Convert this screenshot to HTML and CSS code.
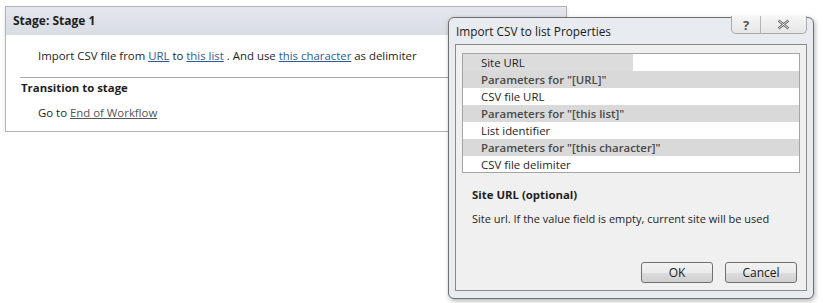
FILE: index.html
```html
<!DOCTYPE html>
<html lang="en">
<head>
  <meta charset="UTF-8">
  <title>Stage: Stage 1</title>
  <link rel="stylesheet" href="styles.css">
</head>
<body>
  <div class="stage">
    <div class="stage-header">Stage: Stage 1</div>
    <div class="stage-action">
      Import CSV file from <a href="#">URL</a> to <a href="#">this list</a> . And use <a href="#">this character</a> as delimiter
    </div>
    <div class="stage-transition">
      <div class="transition-title">Transition to stage</div>
      <div class="transition-go">Go to <a href="#" class="plain-link">End of Workflow</a></div>
    </div>
  </div>

  <div class="dialog">
    <div class="title-buttons">
      <span class="tb tb-help">?</span>
      <span class="tb tb-close">
        <svg width="13" height="11" viewBox="0 0 13 11"><path d="M1.5 1.5 L11.5 9.5 M11.5 1.5 L1.5 9.5" stroke="#666" stroke-width="2.4" fill="none"/><path d="M1.5 1.5 L11.5 9.5 M11.5 1.5 L1.5 9.5" stroke="#fff" stroke-width="0.8" fill="none"/></svg>
      </span>
    </div>
    <div class="dialog-title">Import CSV to list Properties</div>
    <div class="dialog-body">
      <div class="prop-list">
        <div class="prop-row selected"><span class="prop-name">Site URL</span><span class="prop-value"></span></div>
        <div class="prop-row group">Parameters for "[URL]"</div>
        <div class="prop-row">CSV file URL</div>
        <div class="prop-row group">Parameters for "[this list]"</div>
        <div class="prop-row">List identifier</div>
        <div class="prop-row group">Parameters for "[this character]"</div>
        <div class="prop-row">CSV file delimiter</div>
      </div>
      <div class="prop-help">
        <div class="help-title">Site URL (optional)</div>
        <div class="help-text">Site url. If the value field is empty, current site will be used</div>
      </div>
      <div class="dialog-buttons">
        <button class="btn">OK</button>
        <button class="btn">Cancel</button>
      </div>
    </div>
  </div>
</body>
</html>
```

FILE: styles.css
```css
body {
  margin: 0;
  font-family: 'Open Sans', 'Noto Sans', sans-serif;
  font-size: 11.4px;
  color: #1e1e1e;
  background-color: #ffffff;
}
a {
  color: #2f5b96;
}
.plain-link {
  color: #555555;
}
.stage {
  margin: 6px 0 0 5px;
  width: 560px;
  border: 1px solid #b4b4b4;
  background-color: #ffffff;
  box-shadow: 0 2px 4px rgba(0,0,0,0.12);
}
.stage-header {
  height: 28px;
  line-height: 28px;
  padding-left: 7px;
  font-weight: bold;
  font-size: 12px;
  background: linear-gradient(#e3e6ec, #d9dde4);
}
.stage-action {
  padding: 12px 0 12px 32px;
  line-height: 18px;
}
.stage-transition {
  margin-left: 14px;
  border-top: 1px solid #a8a8a8;
  padding-bottom: 9px;
}
.transition-title {
  font-weight: bold;
  padding: 1px 0 0 1px;
  line-height: 17px;
}
.transition-go {
  padding: 8px 0 0 18px;
  line-height: 18px;
}
.dialog {
  position: absolute;
  left: 448px;
  top: 17px;
  width: 364px;
  height: 280px;
  border: 1px solid #6f6f6f;
  border-radius: 6px;
  background-color: #e8ebef;
  box-shadow: 1px 2px 5px rgba(0,0,0,0.3);
}
.dialog-title {
  height: 26px;
  line-height: 26px;
  padding-left: 7px;
  font-size: 11.8px;
  color: #1a1a1a;
}
.title-buttons {
  position: absolute;
  top: -2px;
  right: 6px;
  display: flex;
  border: 1px solid #a9a9a9;
  border-top: none;
  border-radius: 0 0 5px 5px;
  background: linear-gradient(#f6f6f6, #e6e6e6);
}
.tb {
  height: 17px;
  display: flex;
  align-items: center;
  justify-content: center;
  color: #555;
  font-size: 13px;
  font-weight: bold;
}
.tb-help {
  width: 28px;
  border-right: 1px solid #b5b5b5;
}
.tb-close {
  width: 45px;
}
.dialog-body {
  margin: 0 6px;
  height: 247px;
  border: 1px solid #8a8a8a;
  background-color: #f0f0f0;
  padding: 8px 6px 0 6px;
  box-sizing: border-box;
}
.prop-list {
  border: 1px solid #a5a5a5;
  background-color: #ffffff;
  height: 120px;
  box-sizing: border-box;
}
.prop-row {
  height: 17px;
  line-height: 17px;
  padding-left: 18px;
  display: flex;
}
.prop-row.group {
  background-color: #d9d9d9;
  color: #4a4a4a;
  font-weight: 600;
}
.prop-row.selected {
  padding-left: 0;
}
.prop-name {
  width: 152px;
  padding-left: 18px;
  background-color: #dcdcdc;
}
.prop-help {
  padding: 13px 0 0 10px;
}
.help-title {
  font-weight: bold;
  line-height: 18px;
}
.help-text {
  margin-top: 6px;
  font-size: 11px;
  line-height: 18px;
}
.dialog-buttons {
  display: flex;
  justify-content: flex-end;
  gap: 12px;
  margin-top: 34px;
  padding-right: 3px;
}
.btn {
  width: 72px;
  height: 21px;
  font-family: inherit;
  font-size: 12px;
  color: #1a1a1a;
  border: 1px solid #707070;
  border-radius: 3px;
  background: linear-gradient(#f2f2f2 0%, #ebebeb 50%, #dddddd 51%, #cfcfcf 100%);
  padding: 0;
}
```
